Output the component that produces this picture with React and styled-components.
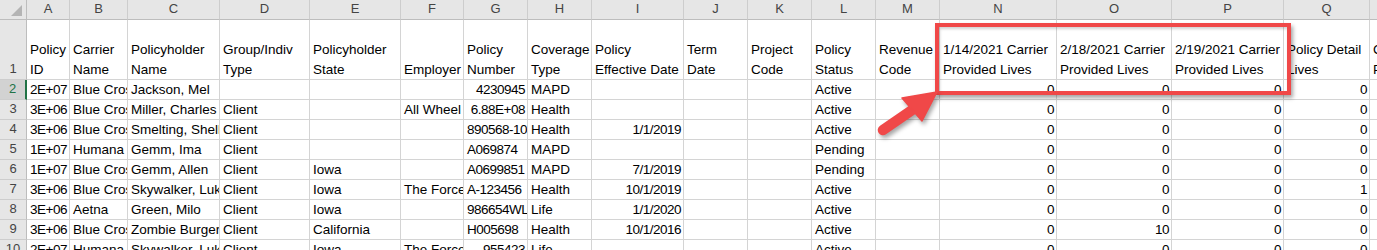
import React from "react";
import styled, { createGlobalStyle } from "styled-components";

const COLS = [
  { key: "A", w: 43, title: ["Policy", "ID"] },
  { key: "B", w: 58, title: ["Carrier", "Name"] },
  { key: "C", w: 92, title: ["Policyholder", "Name"] },
  { key: "D", w: 90, title: ["Group/Indiv", "Type"] },
  { key: "E", w: 91, title: ["Policyholder", "State"] },
  { key: "F", w: 63, title: ["Employer"] },
  { key: "G", w: 64, title: ["Policy", "Number"] },
  { key: "H", w: 64, title: ["Coverage", "Type"] },
  { key: "I", w: 92, title: ["Policy", "Effective Date"] },
  { key: "J", w: 64, title: ["Term", "Date"] },
  { key: "K", w: 64, title: ["Project", "Code"] },
  { key: "L", w: 64, title: ["Policy", "Status"] },
  { key: "M", w: 64, title: ["Revenue", "Code"] },
  { key: "N", w: 117, title: ["1/14/2021 Carrier", "Provided Lives"] },
  { key: "O", w: 115, title: ["2/18/2021 Carrier", "Provided Lives"] },
  { key: "P", w: 112, title: ["2/19/2021 Carrier", "Provided Lives"] },
  { key: "Q", w: 86, title: ["Policy Detail", "Lives"] },
  { key: "R", w: 64, title: ["Carrier", "Provided"] },
];

// right aligned value (numbers, dates)
const R = (v) => ({ v, right: true });
const zeros = (a = 0, b = 0, c = 0, d = 0) => [R(a), R(b), R(c), R(d), ""];

const ROWS = [
  [R("2E+07"), "Blue Cross", "Jackson, Mel", "", "", "", R("4230945"), "MAPD", "", "", "", "Active", "", ...zeros()],
  [R("3E+06"), "Blue Cross", "Miller, Charles", "Client", "", "All Wheel Drive", R("6.88E+08"), "Health", "", "", "", "Active", "", ...zeros()],
  [R("3E+06"), "Blue Cross", "Smelting, Shelly", "Client", "", "", "890568-10", "Health", R("1/1/2019"), "", "", "Active", "", ...zeros()],
  [R("1E+07"), "Humana", "Gemm, Ima", "Client", "", "", "A069874", "MAPD", "", "", "", "Pending", "", ...zeros()],
  [R("1E+07"), "Blue Cross", "Gemm, Allen", "Client", "Iowa", "", "A0699851", "MAPD", R("7/1/2019"), "", "", "Pending", "", ...zeros()],
  [R("3E+06"), "Blue Cross", "Skywalker, Luke", "Client", "Iowa", "The Force", "A-123456", "Health", R("10/1/2019"), "", "", "Active", "", ...zeros(0, 0, 0, 1)],
  [R("3E+06"), "Aetna", "Green, Milo", "Client", "Iowa", "", "986654WL", "Life", R("1/1/2020"), "", "", "Active", "", ...zeros()],
  [R("3E+06"), "Blue Cross", "Zombie Burger", "Client", "California", "", "H005698", "Health", R("10/1/2016"), "", "", "Active", "", ...zeros(0, 10, 0, 0)],
  [R("2E+07"), "Humana", "Skywalker, Luke", "Client", "Iowa", "The Force", R("955423"), "Life", "", "", "", "Active", "", ...zeros()],
];

const GlobalStyle = createGlobalStyle`
  html, body {
    margin: 0;
    padding: 0;
    background: #fff;
    overflow: hidden;
  }
  body {
    font-family: "Liberation Sans", Arial, sans-serif;
  }
`;

const Page = styled.div`
  position: relative;
  width: 1377px;
  height: 250px;
  overflow: hidden;
  background: #fff;
`;

const Sheet = styled.div`
  display: grid;
  grid-template-columns: ${(p) => p.$cols};
  grid-template-rows: 20px 60px;
  grid-auto-rows: 20px;
  font-size: 13.5px;
  color: #000;
`;

const Corner = styled.div`
  box-sizing: border-box;
  background: #e6e6e6;
  border-right: 1px solid #bdbdbd;
  border-bottom: 1px solid #bdbdbd;
  display: flex;
  justify-content: flex-end;
  align-items: flex-end;
  padding: 0 4px 3px 0;
`;

const CornerMark = styled.span`
  width: 0;
  height: 0;
  border-style: solid;
  border-width: 0 0 11px 11px;
  border-color: transparent transparent #b4b4b4 transparent;
`;

const ColHead = styled.div`
  box-sizing: border-box;
  background: #e6e6e6;
  border-right: 1px solid #cdcdcd;
  border-bottom: 1px solid #bdbdbd;
  text-align: center;
  line-height: 18px;
  font-size: 13px;
  color: #444;
  overflow: hidden;
`;

const RowNum = styled.div`
  box-sizing: border-box;
  background: ${(p) => (p.$active ? "#d2d2d2" : "#e6e6e6")};
  color: ${(p) => (p.$active ? "#217346" : "#444")};
  border-right: ${(p) => (p.$active ? "2px solid #217346" : "1px solid #bdbdbd")};
  border-bottom: 1px solid #cdcdcd;
  font-size: 13px;
  display: flex;
  justify-content: center;
  align-items: flex-end;
  padding-bottom: 2px;
  line-height: 16px;
`;

const TitleCell = styled.div`
  box-sizing: border-box;
  border-right: 1px solid #d4d4d4;
  border-bottom: 1px solid #d4d4d4;
  padding: 0 0 2px 3px;
  display: flex;
  flex-direction: column;
  justify-content: flex-end;
  gap: 6px;
  overflow: hidden;
  white-space: nowrap;
  line-height: 14px;
`;

const Cell = styled.div`
  box-sizing: border-box;
  border-right: 1px solid #d4d4d4;
  border-bottom: 1px solid #d4d4d4;
  padding: ${(p) => (p.$right ? "0 2px 0 0" : "0 0 0 3px")};
  text-align: ${(p) => (p.$right ? "right" : "left")};
  letter-spacing: ${(p) => (p.$tight ? "-0.5px" : "0")};
  line-height: 20px;
  white-space: nowrap;
  overflow: hidden;
`;

const Frame = styled.div`
  position: absolute;
  left: 935px;
  top: 23px;
  width: 356px;
  height: 72px;
  box-sizing: border-box;
  border: 4px solid #f04848;
  box-shadow: 2px 3px 4px rgba(0, 0, 0, 0.35), inset 1px 2px 3px rgba(0, 0, 0, 0.18);
  pointer-events: none;
`;

const ArrowLayer = styled.svg`
  position: absolute;
  left: 0;
  top: 0;
  pointer-events: none;
  filter: drop-shadow(2px 3px 2px rgba(0, 0, 0, 0.35));
`;

const Arrow = () => (
  <ArrowLayer width="1377" height="250" viewBox="0 0 1377 250">
    <line x1="883" y1="130" x2="915" y2="108" stroke="#f04848" strokeWidth="10.5" strokeLinecap="round" />
    <polygon points="937,92 902,98 922,121" fill="#f04848" stroke="#f04848" strokeWidth="1.5" strokeLinejoin="round" />
  </ArrowLayer>
);

export default function App() {
  const cols = ["27px", ...COLS.map((c) => `${c.w}px`)].join(" ");

  return (
    <Page>
      <GlobalStyle />
      <Sheet $cols={cols}>
        <Corner>
          <CornerMark />
        </Corner>
        {COLS.map((c) => (
          <ColHead key={c.key}>{c.key}</ColHead>
        ))}

        <RowNum>1</RowNum>
        {COLS.map((c) => (
          <TitleCell key={c.key}>
            {c.title.map((line) => (
              <span key={line}>{line}</span>
            ))}
          </TitleCell>
        ))}

        {ROWS.map((row, i) => (
          <React.Fragment key={i}>
            <RowNum $active={i === 0}>{i + 2}</RowNum>
            {row.map((cell, j) => {
              const right = typeof cell === "object";
              const value = right ? cell.v : cell;
              return (
                <Cell key={j} $right={right} $tight={/\d/.test(String(value))}>
                  {value}
                </Cell>
              );
            })}
          </React.Fragment>
        ))}
      </Sheet>
      <Frame />
      <Arrow />
    </Page>
  );
}
